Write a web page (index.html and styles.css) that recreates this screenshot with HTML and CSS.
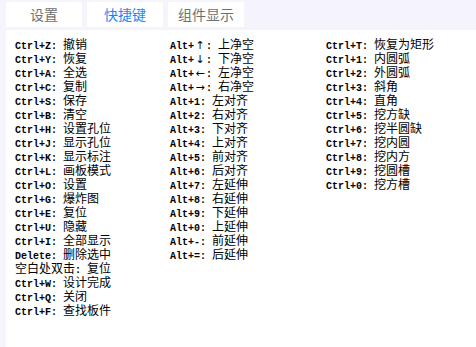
FILE: index.html
```html
<!DOCTYPE html>
<html lang="zh">
<head>
<meta charset="utf-8">
<link rel="stylesheet" href="styles.css">
</head>
<body>
<div class="app">
  <div class="tabs">
    <div class="tab">设置</div>
    <div class="tab active">快捷键</div>
    <div class="tab">组件显示</div>
  </div>
  <div class="panel">
    <div class="col">
      <div class="row"><span class="k">Ctrl+Z: </span>撤销</div>
      <div class="row"><span class="k">Ctrl+Y: </span>恢复</div>
      <div class="row"><span class="k">Ctrl+A: </span>全选</div>
      <div class="row"><span class="k">Ctrl+C: </span>复制</div>
      <div class="row"><span class="k">Ctrl+S: </span>保存</div>
      <div class="row"><span class="k">Ctrl+B: </span>清空</div>
      <div class="row"><span class="k">Ctrl+H: </span>设置孔位</div>
      <div class="row"><span class="k">Ctrl+J: </span>显示孔位</div>
      <div class="row"><span class="k">Ctrl+K: </span>显示标注</div>
      <div class="row"><span class="k">Ctrl+L: </span>画板模式</div>
      <div class="row"><span class="k">Ctrl+O: </span>设置</div>
      <div class="row"><span class="k">Ctrl+G: </span>爆炸图</div>
      <div class="row"><span class="k">Ctrl+E: </span>复位</div>
      <div class="row"><span class="k">Ctrl+U: </span>隐藏</div>
      <div class="row"><span class="k">Ctrl+I: </span>全部显示</div>
      <div class="row"><span class="k">Delete: </span>删除选中</div>
      <div class="row">空白处双击<span class="k">: </span>复位</div>
      <div class="row"><span class="k">Ctrl+W: </span>设计完成</div>
      <div class="row"><span class="k">Ctrl+Q: </span>关闭</div>
      <div class="row"><span class="k">Ctrl+F: </span>查找板件</div>
    </div>
    <div class="col">
      <div class="row"><span class="k">Alt+<span class="arr">↑</span>: </span>上净空</div>
      <div class="row"><span class="k">Alt+<span class="arr">↓</span>: </span>下净空</div>
      <div class="row"><span class="k">Alt+<span class="arr">←</span>: </span>左净空</div>
      <div class="row"><span class="k">Alt+<span class="arr">→</span>: </span>右净空</div>
      <div class="row"><span class="k">Alt+1: </span>左对齐</div>
      <div class="row"><span class="k">Alt+2: </span>右对齐</div>
      <div class="row"><span class="k">Alt+3: </span>下对齐</div>
      <div class="row"><span class="k">Alt+4: </span>上对齐</div>
      <div class="row"><span class="k">Alt+5: </span>前对齐</div>
      <div class="row"><span class="k">Alt+6: </span>后对齐</div>
      <div class="row"><span class="k">Alt+7: </span>左延伸</div>
      <div class="row"><span class="k">Alt+8: </span>右延伸</div>
      <div class="row"><span class="k">Alt+9: </span>下延伸</div>
      <div class="row"><span class="k">Alt+0: </span>上延伸</div>
      <div class="row"><span class="k">Alt+-: </span>前延伸</div>
      <div class="row"><span class="k">Alt+=: </span>后延伸</div>
    </div>
    <div class="col">
      <div class="row"><span class="k">Ctrl+T: </span>恢复为矩形</div>
      <div class="row"><span class="k">Ctrl+1: </span>内圆弧</div>
      <div class="row"><span class="k">Ctrl+2: </span>外圆弧</div>
      <div class="row"><span class="k">Ctrl+3: </span>斜角</div>
      <div class="row"><span class="k">Ctrl+4: </span>直角</div>
      <div class="row"><span class="k">Ctrl+5: </span>挖方缺</div>
      <div class="row"><span class="k">Ctrl+6: </span>挖半圆缺</div>
      <div class="row"><span class="k">Ctrl+7: </span>挖内圆</div>
      <div class="row"><span class="k">Ctrl+8: </span>挖内方</div>
      <div class="row"><span class="k">Ctrl+9: </span>挖圆槽</div>
      <div class="row"><span class="k">Ctrl+0: </span>挖方槽</div>
    </div>
  </div>
</div>
</body>
</html>
```

FILE: styles.css
```css
html, body {
  margin: 0;
  padding: 0;
  background: #f5f4fd;
}
.app {
  width: 476px;
  height: 347px;
  display: flex;
  flex-direction: column;
  background: #f5f4fd;
  overflow: hidden;
}
.tabs {
  display: flex;
  gap: 5px;
  padding: 2px 0 0 6px;
  height: 25px;
}
.tab {
  width: 76px;
  height: 25px;
  background: #ffffff;
  color: #707070;
  font-family: "Noto Sans CJK SC", sans-serif;
  font-size: 14px;
  line-height: 25px;
  text-align: center;
}
.tab.active {
  color: #1e86f2;
}
.panel {
  flex: 1;
  margin: 3px 0 0 6px;
  background: #ffffff;
  display: grid;
  grid-template-columns: 155px 156px 1fr;
  align-items: start;
  padding: 7px 0 0 9px;
  font-family: "Noto Sans CJK SC", sans-serif;
  font-size: 12px;
  color: #000000;
}
.row {
  height: 14px;
  line-height: 14px;
  white-space: nowrap;
}
.k {
  font-family: "Liberation Mono", monospace;
  font-size: 10px;
  font-weight: bold;
  letter-spacing: 0;
}
.arr {
  display: inline-block;
  width: 12px;
  text-align: center;
  font-family: "DejaVu Sans", sans-serif;
  font-size: 11px;
  font-weight: normal;
}
```
